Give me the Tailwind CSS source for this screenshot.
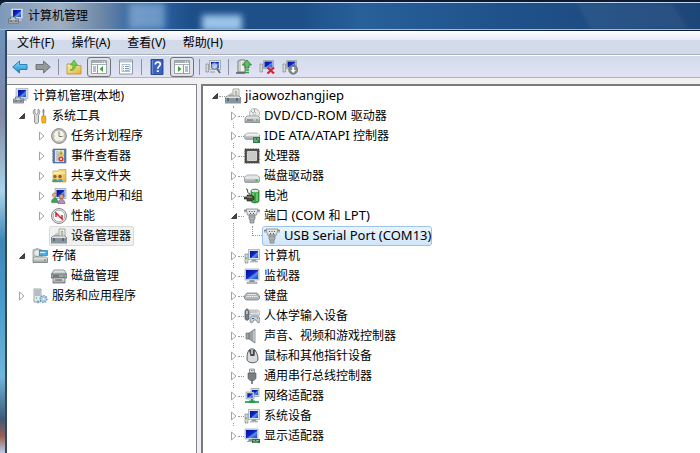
<!DOCTYPE html>
<html lang="zh-CN">
<head>
  <meta charset="UTF-8" />
  <meta name="viewport" content="width=device-width, initial-scale=1.0"/>
  <title>计算机管理</title>
  <script src="https://cdn.jsdelivr.net/npm/@tailwindcss/browser@4"></script>
</head>
<body class="h-screen overflow-hidden flex flex-col bg-[#12233c] font-['Noto_Sans','Noto_Sans_CJK_SC',sans-serif] text-xs text-black">

  <!-- Icon set -->
  <svg class="absolute size-0" aria-hidden="true">
    <defs>
      <linearGradient id="screen" x1="0" y1="0" x2="1" y2="1">
        <stop offset="0" stop-color="#050f8c"/><stop offset=".5" stop-color="#0c28c8"/><stop offset=".62" stop-color="#5c90ee"/><stop offset="1" stop-color="#1a40c0"/>
      </linearGradient>
      <linearGradient id="metal" x1="0" y1="0" x2="0" y2="1">
        <stop offset="0" stop-color="#f4f5f5"/><stop offset="1" stop-color="#9a9fa1"/>
      </linearGradient>
      <linearGradient id="blue" x1="0" y1="0" x2="0" y2="1">
        <stop offset="0" stop-color="#8fdcf8"/><stop offset="1" stop-color="#148bd0"/>
      </linearGradient>
      <linearGradient id="folder" x1="0" y1="0" x2="1" y2="1">
        <stop offset="0" stop-color="#fdf0a8"/><stop offset="1" stop-color="#e3b23c"/>
      </linearGradient>
    </defs>
    <symbol id="i-manage" viewBox="0 0 16 16">
      <path d="M3 .5h12v10H3z" fill="#d5dae3" stroke="#9aa2b0" stroke-width=".6"/>
      <path d="M5 2h8v7H5z" fill="url(#screen)"/>
      <path d="M9 10h4l1 3H8z" fill="#b7bdc8"/>
      <path d="M.5 11h2V9h5v2h3v4H.5z" fill="#c3cacd" stroke="#59646a" stroke-width=".7"/>
      <path d="M1 13h9M3 12v2M8 12v2" stroke="#4a5560" stroke-width=".8"/>
    </symbol>
    <symbol id="i-monitor" viewBox="0 0 16 16">
      <path d="M1 1h14v11H1z" fill="#dfe2e6" stroke="#8e959e" stroke-width=".6"/>
      <path d="M2 2h12v9H2z" fill="url(#screen)"/>
      <path d="M6 12h4l1 2H5z" fill="#8d949c"/><path d="M3 14h10v1.500H3z" fill="#c0c5ca" stroke="#828890" stroke-width=".5"/>
    </symbol>
    <symbol id="i-computer" viewBox="0 0 16 16">
      <path d="M1 6h3v9H1z" fill="#d7dad3" stroke="#777e7a" stroke-width=".6"/><path d="M2 9v2" stroke="#36a83c"/>
      <path d="M4.500 1.500h11v10h-11z" fill="#dfe2e6" stroke="#8e959e" stroke-width=".6"/>
      <path d="M6 3h8v7H6z" fill="url(#screen)"/>
      <path d="M8 11.500h4l1 2H7z" fill="#8d949c"/><path d="M6 13h8v1.500H6z" fill="#b7bcc2"/>
    </symbol>
    <symbol id="i-display" viewBox="0 0 16 16">
      <path d="M1 1h13v10H1z" fill="#dfe2e6" stroke="#8e959e" stroke-width=".6"/>
      <path d="M2 2h11v8H2z" fill="url(#screen)"/>
      <path d="M5 11h4v2H4z" fill="#8d949c"/><path d="M3 13h6v1H3z" fill="#a0a5aa"/>
      <path d="M8 11h8v4H8z" fill="#2c6b4c"/><path d="M9 12.500h2M12 12.500h3M9 14h5" stroke="#a9d6b5" stroke-width=".7"/>
    </symbol>
    <symbol id="i-tools" viewBox="0 0 16 16">
      <path d="M3 1v4l1.500 1.500L6 5V1c2 1 2.500 4 .5 6v7c0 2-4 2-4 0V7C.5 5 1 2 3 1z" fill="#d5d9dc" stroke="#6d7377" stroke-width=".7"/>
      <path d="M11 1h1l.5 2-.5 5h-1l-.5-5z" fill="#848a8e"/><path d="M10 8h3.500l.5 3-.5 4h-3.500l-.5-4z" fill="#f4b51e" stroke="#b87808" stroke-width=".6"/>
    </symbol>
    <symbol id="i-clock" viewBox="0 0 16 16">
      <circle cx="8" cy="8" r="7.500" fill="#b9bbbd" stroke="#7b7f83" stroke-width=".8"/>
      <circle cx="8" cy="8" r="5.900" fill="#fbf1df" stroke="#9d9f9f" stroke-width=".5"/>
      <path d="M8 4v4.500h3.500" fill="none" stroke="#5f86a6"/><path d="M8 3v1M8 12v1M3 8h1M12 8h1" stroke="#b29a6c" stroke-width=".7"/>
    </symbol>
    <symbol id="i-events" viewBox="0 0 16 16">
      <path d="M2 1h13v14H2z" fill="#5b82b3" stroke="#3f5f8a" stroke-width=".6"/><path d="M4 2h9v12H4z" fill="#e4e4dc"/>
      <path d="M5 4h3M5 6h3M5 8h3M5 10h3M5 12h3" stroke="#8091aa" stroke-width=".7"/>
      <path d="M10 2.500l3 5.500H7z" fill="#f8d64a" stroke="#a88920" stroke-width=".4"/><path d="M10 4.500v2" stroke="#332c12" stroke-width=".8"/><circle cx="10" cy="11" r="2.600" fill="#d8392e"/><path d="M9 10l2 2M11 10l-2 2" stroke="#fff" stroke-width=".7"/>
      <path d="M1 3h2M1 6h2M1 9h2M1 12h2" stroke="#747d87"/>
    </symbol>
    <symbol id="i-shared" viewBox="0 0 16 16">
      <path d="M2 3h5l1-1.500h7V14H2z" fill="url(#folder)" stroke="#bd9233" stroke-width=".6"/><path d="M2 5h12" stroke="#fff6c5"/>
      <circle cx="4" cy="8.500" r="1.700" fill="#8d6a2e"/><circle cx="9" cy="8.500" r="1.700" fill="#8a5a2c"/>
      <path d="M1 14c0-4 6-4 6 0z" fill="#3fa66a"/><path d="M6.500 14c0-4 5.500-4 5.500 0z" fill="#3c9dc0"/>
    </symbol>
    <symbol id="i-users" viewBox="0 0 16 16">
      <path d="M4 .5h11v10H4z" fill="#d8dde4" stroke="#808996" stroke-width=".6"/><path d="M5.500 2h8v7h-8z" fill="url(#screen)"/>
      <circle cx="3.500" cy="7" r="2.100" fill="#e2b282" stroke="#805023" stroke-width=".5"/><circle cx="10.500" cy="8.500" r="2.200" fill="#dba371" stroke="#643917" stroke-width=".5"/>
      <path d="M.5 14.500c0-6 6.500-6 6.500 0z" fill="#39a650" stroke="#1e6d34" stroke-width=".5"/><path d="M7 15.700c0-6 7-6 7 0z" fill="#b98ac4" stroke="#71376b" stroke-width=".5"/>
    </symbol>
    <symbol id="i-perf" viewBox="0 0 16 16">
      <circle cx="8" cy="8" r="7.500" fill="#ececec" stroke="#74787a" stroke-width=".9"/><circle cx="8" cy="8" r="5.800" fill="#fff" stroke="#8b8f91" stroke-width=".7"/>
      <path d="M5 9V5l6 6V7" fill="none" stroke="#d3222b" stroke-width="1.500"/>
    </symbol>
    <symbol id="i-device" viewBox="0 0 16 16">
      <path d="M8 1h6v8H8z" fill="#f4f5ef" stroke="#7d8581" stroke-width=".7"/><path d="M10 3h2v4h-2z" fill="#c7ceb4" stroke="#7e876f" stroke-width=".4"/>
      <path d="M4 6l4-2v4H3z" fill="#bdc3c6"/>
      <path d="M2 8h12l2 2v5H0v-5z" fill="url(#metal)" stroke="#5d676c" stroke-width=".7"/><path d="M0 11h16" stroke="#4d5b63"/><path d="M0 11.500h16V15H0z" fill="#87969e"/><path d="M3 10v3M12 10v3" stroke="#364148"/>
    </symbol>
    <symbol id="i-storage" viewBox="0 0 16 16">
      <path d="M1 2l4-1.500L10 2v8H1z" fill="#d5d8d9" stroke="#777c80" stroke-width=".6"/><circle cx="5" cy="5" r="3.500" fill="#e6e8e8" stroke="#858b8e" stroke-width=".6"/>
      <path d="M7.500 2.500h8v5h-8z" fill="#43b4ea" stroke="#1b6b9a" stroke-width=".6"/><path d="M8 4.500h5" stroke="#d9f5ff"/>
      <path d="M1 10l1-1h12l1.500 1v4.500H1z" fill="url(#metal)" stroke="#6c7275" stroke-width=".7"/><path d="M12 12h2" stroke="#3ca642"/>
    </symbol>
    <symbol id="i-disks" viewBox="0 0 16 16">
      <path d="M3 2h10l2 3v3H1V5z" fill="url(#metal)" stroke="#666d70" stroke-width=".7"/><path d="M0 6h16v4H0z" fill="#a1a6a8" stroke="#595f62" stroke-width=".7"/>
      <path d="M2 10h12v5H2z" fill="url(#metal)" stroke="#595f62" stroke-width=".7"/><path d="M2 8h6M4 12h7" stroke="#464d50"/><path d="M12 8h2" stroke="#39a83d"/>
    </symbol>
    <symbol id="i-services" viewBox="0 0 16 16">
      <path d="M2 1h7v13H2z" fill="#e4e9ed" stroke="#78838d" stroke-width=".7"/><path d="M3 3h5M3 5h5M3 7h5" stroke="#697a89" stroke-width=".8"/><path d="M4 10h1" stroke="#36a93d"/>
      <circle cx="11.500" cy="11" r="3.200" fill="#d8e9f6" stroke="#6993b6" stroke-width="1.600" stroke-dasharray="1.500 .9"/><circle cx="11.500" cy="11" r="2.300" fill="#a4c7e2"/><circle cx="11.500" cy="11" r="1" fill="#fff"/>
      <circle cx="6" cy="14" r="1.400" fill="#83aac8"/>
    </symbol>
    <symbol id="i-dvd" viewBox="0 0 16 16">
      <circle cx="10.500" cy="5.500" r="5" fill="#eceeee" stroke="#979c9e" stroke-width=".7"/><path d="M10.500 1v3M7 3l2 2" stroke="#a0a6a9"/><circle cx="10.500" cy="5.500" r="1.300" fill="#fff" stroke="#8a8f91" stroke-width=".6"/>
      <path d="M1 10l2-2h11l2 2v4.500H1z" fill="url(#metal)" stroke="#747a7c" stroke-width=".7"/><path d="M3 12h6" stroke="#606669"/><path d="M12 12h2" stroke="#3aa73d"/>
    </symbol>
    <symbol id="i-ide" viewBox="0 0 16 16">
      <path d="M.5 7l3-2h9l3 2v4.500h-13c-1 0-2-.7-2-2z" fill="url(#metal)" stroke="#93989a" stroke-width=".7"/><path d="M2 7h13" stroke="#fff"/>
      <path d="M9 9h7v6H9z" fill="#2a7a48"/><path d="M10 11h2M13 11h2M10 13h4" stroke="#bde0c0" stroke-width=".8"/>
    </symbol>
    <symbol id="i-cpu" viewBox="0 0 16 16">
      <path d="M1 1h14v14H1z" fill="#55534f" stroke="#3a352e" stroke-width="1.200" stroke-dasharray="1 .6"/><path d="M3.500 3.500h9v9h-9z" fill="#c9cbca" stroke="#f0f0ee" stroke-width=".7"/>
    </symbol>
    <symbol id="i-disk" viewBox="0 0 16 16">
      <path d="M.5 9l3-2h9l3 2v4c0 1-.5 1.500-1.500 1.500H2C1 14.500.5 14 .5 13z" fill="url(#metal)" stroke="#8a8f91" stroke-width=".7"/><path d="M1 10h14" stroke="#fff" stroke-width=".8"/><path d="M11.500 12.300h2" stroke="#31a537" stroke-width="1.400"/>
    </symbol>
    <symbol id="i-battery" viewBox="0 0 16 16">
      <path d="M7 3c0-2.500 8-2.500 8 0v10c0 2.500-8 2.500-8 0z" fill="#35a83f" stroke="#1c5f25" stroke-width=".7"/><ellipse cx="11" cy="3" rx="3.500" ry="1.300" fill="#dfe8df"/><path d="M9 5v8M13 5v8" stroke="#a0e39b"/>
      <path d="M2 1c3 0 0 4 4 5" fill="none" stroke="#222"/><path d="M0 9h3V7h4l3 1.500v3L7 13H3v-2H0" fill="#4b4b42" stroke="#1d1d1a" stroke-width=".6"/><path d="M3 9h5" stroke="#b5a45c"/>
    </symbol>
    <symbol id="i-port" viewBox="0 0 16 16">
      <path d="M0 2h16v1H0z" fill="#8b9093"/><path d="M2 1h12l-1.500 6h-9z" fill="#e2e4e5" stroke="#7f8588" stroke-width=".8"/><path d="M1 1.500v3M15 1.500v3" stroke="#7f8588" stroke-width="1.200"/>
      <path d="M5 3.500h1M7.500 3.500h1M10 3.500h1M6 5.500h1M9 5.500h1" stroke="#51585c"/>
      <path d="M5 7h6v4l-1 1v3H6v-3l-1-1z" fill="#b2b6b8" stroke="#6d7376" stroke-width=".7"/><path d="M5 9h6M6 12h4" stroke="#7f8587" stroke-width=".7"/>
    </symbol>
    <symbol id="i-keyboard" viewBox="0 0 16 16">
      <path d="M3 5h10l2.500 3v2.500L14 12H2L.5 10.500V8z" fill="#b4b7b9" stroke="#6e7376" stroke-width=".7"/><path d="M3.500 6.500h9M2.500 8.500h11" stroke="#f7f7f7" stroke-width="1.100" stroke-dasharray="1.200 .6"/>
    </symbol>
    <symbol id="i-hid" viewBox="0 0 16 16">
      <path d="M1 4c0-4 4-4 4 0v6c0 3-4 3-4 0z" fill="#777d80" stroke="#474c4f" stroke-width=".7"/><path d="M3 3v3" stroke="#fff"/>
      <path d="M5 2h9l2 2v3H6z" fill="#dfe2e4" stroke="#8b9194" stroke-width=".6"/><path d="M6 4h8" stroke="#8e9497" stroke-dasharray="1 .6"/>
      <path d="M6 14c0-6 1-6 3-6h4c2 0 3 1 3 6l-2 1-2-3h-2l-2 3z" fill="#c4d1da" stroke="#67747c" stroke-width=".7"/><path d="M8 10.500h2M13 10h1" stroke="#34698c"/>
    </symbol>
    <symbol id="i-sound" viewBox="0 0 16 16">
      <path d="M2 5h3l6-4v14l-6-4H2z" fill="#9ea2a5" stroke="#6c7174" stroke-width=".7"/><path d="M10 2.500v11" stroke="#dfe1e2"/><path d="M5 5v6" stroke="#5c6164" stroke-width=".7"/>
    </symbol>
    <symbol id="i-mouse" viewBox="0 0 16 16">
      <path d="M5 2c1-1.500 5-1.500 6 0 2 3 3 6 3 9 0 5-11 5-11 0 0-3 0-6 2-9z" fill="#d9dadb" stroke="#484b4d" stroke-width=".9"/><path d="M5 2l1.500 6h4L11 2" fill="#46494b"/><path d="M8 2v4" stroke="#ececec" stroke-width="1.400"/>
    </symbol>
    <symbol id="i-usb" viewBox="0 0 16 16">
      <path d="M5.500 1h5v4h-5z" fill="#e0e2e3" stroke="#707578" stroke-width=".7"/><path d="M7 2.500h.8M8.600 2.500h.8" stroke="#555"/><path d="M4 5h8v5c0 1-1.500 2-2.500 2.500h-3C5.500 12 4 11 4 10z" fill="#7a7e80" stroke="#505456" stroke-width=".6"/><path d="M8 12v4" stroke="#55595b" stroke-width="1.400"/>
    </symbol>
    <symbol id="i-network" viewBox="0 0 16 16">
      <path d="M7 .5h8v8H7z" fill="#dfe3e7" stroke="#7c8792" stroke-width=".6"/><path d="M8 2h6v5H8z" fill="url(#screen)"/>
      <path d="M2 4h8v7H2z" fill="#dfe3e7" stroke="#7c8792" stroke-width=".6"/><path d="M3.300 5.300h5.500v4.500H3.300z" fill="url(#screen)"/>
      <path d="M8 11v3" stroke="#239a50" stroke-width="2"/><path d="M1 14h14" stroke="#32b567" stroke-width="2"/><path d="M5 12.500h6v2.500H5z" fill="#239a50"/>
    </symbol>
    <symbol id="i-back" viewBox="0 0 16 16">
      <path d="M.7 8L7.500 2v3.500H15v5H7.500V14z" fill="url(#blue)" stroke="#1f77b4" stroke-width=".9"/>
    </symbol>
    <symbol id="i-forward" viewBox="0 0 16 16">
      <path d="M15.300 8L8.500 2v3.500H1v5h7.500V14z" fill="#96999b" stroke="#6a6d6f" stroke-width=".9"/>
    </symbol>
    <symbol id="i-up" viewBox="0 0 16 16">
      <path d="M1 5h5l1 1.500h8V15H1z" fill="url(#folder)" stroke="#b98e34" stroke-width=".8"/><path d="M4 11c3 0 3-3 3-5H4.500L8 1l3.500 5H9.500c0 4-2 6-5.500 5z" fill="#6fd04e" stroke="#3c9a2a" stroke-width=".6"/>
    </symbol>
    <symbol id="i-pane-left" viewBox="0 0 16 16">
      <path d="M.5 1.500h15v13H.5z" fill="#fff" stroke="#9aa2a9"/><path d="M1 2h14v2H1z" fill="#a5adb5"/><path d="M1 5.500h14" stroke="#a8b0b7"/><path d="M6.500 6v8" stroke="#8f99a3"/><path d="M2 8h3M2 10h3M2 12h3" stroke="#637f9f"/><path d="M12 7v6l-3.500-3z" fill="#3aa535"/><path d="M11 3h1M13 3h1" stroke="#fff"/>
    </symbol>
    <symbol id="i-pane-right" viewBox="0 0 16 16">
      <path d="M.5 1.500h15v13H.5z" fill="#fff" stroke="#9aa2a9"/><path d="M1 2h14v2H1z" fill="#a5adb5"/><path d="M1 5.500h14" stroke="#a8b0b7"/><path d="M9.500 6v8" stroke="#8f99a3"/><path d="M11 8h3M11 10h3M11 12h3" stroke="#637f9f"/><path d="M4 7v6l3.500-3z" fill="#3aa535"/><path d="M11 3h1M13 3h1" stroke="#fff"/>
    </symbol>
    <symbol id="i-props" viewBox="0 0 16 16">
      <path d="M1.500 1h13v14h-13z" fill="#fff" stroke="#85909b" stroke-width=".9"/><path d="M2 1.500h12v2H2z" fill="#b5c3d2"/><path d="M4 5.500h8v7H4z" fill="none" stroke="#8ea4ba" stroke-width=".7"/><path d="M5 7.500h1M7 7.500h4M5 9.500h1M7 9.500h4M5 11.300h1M7 11.300h4" stroke="#7d9aba"/>
    </symbol>
    <symbol id="i-help" viewBox="0 0 16 16">
      <path d="M2 .5h12v15H2z" fill="#3d62bd" stroke="#1a367f" stroke-width=".8"/><path d="M3.500 1v14" stroke="#6c8fdc"/><path d="M6.300 5.500c0-3.500 5.400-3 5 0-.2 1.700-2.500 2-2.500 4.300" fill="none" stroke="#fff" stroke-width="1.700"/><path d="M7.800 11.300h2v1.700h-2z" fill="#fff"/>
    </symbol>
    <symbol id="i-scan" viewBox="0 0 16 16">
      <path d="M1 5h2.500v8H1z" fill="#d6d9d5" stroke="#777d7a" stroke-width=".6"/><path d="M4.500 1.500h11v9h-11z" fill="#dfe2e6" stroke="#848b94" stroke-width=".6"/><path d="M6 3h8v6H6z" fill="url(#screen)"/><path d="M5 13h5" stroke="#9298a0"/>
      <circle cx="9.500" cy="7" r="3.200" fill="#d9eefc" fill-opacity=".75" stroke="#687481"/><path d="M12 9.500l3 4.500" stroke="#59636f" stroke-width="1.700"/>
    </symbol>
    <symbol id="i-update" viewBox="0 0 16 16">
      <path d="M2 2l2-1h5v12H2z" fill="#f0f1ec" stroke="#565e5b" stroke-width=".8"/><path d="M4 1v12M6 4h2M6 6h2" stroke="#8a928c" stroke-width=".7"/><path d="M0 14h9" stroke="#3f4744" stroke-width="1.300"/>
      <path d="M11 1l4.500 5H13v3H9V6H6.500z" fill="#5cc069" stroke="#176c2a" stroke-width=".7"/><path d="M9 11h4M9 13.500h4" stroke="#329e45" stroke-width="1.500"/>
    </symbol>
    <symbol id="i-remove" viewBox="0 0 16 16">
      <path d="M1 5h2.500v8H1z" fill="#d6d9d5" stroke="#777d7a" stroke-width=".6"/><path d="M4.500 1.500h10v8h-10z" fill="#dfe2e6" stroke="#848b94" stroke-width=".6"/><path d="M5.500 2.500h8v6h-8z" fill="url(#screen)"/>
      <path d="M8.500 8.500l6.500 6M15 8.500l-6.500 6" stroke="#dc1f2a" stroke-width="2.200"/>
    </symbol>
    <symbol id="i-disable" viewBox="0 0 16 16">
      <path d="M1 5h2.500v8H1z" fill="#d6d9d5" stroke="#777d7a" stroke-width=".6"/><path d="M4.500 1.500h10v8h-10z" fill="#dfe2e6" stroke="#848b94" stroke-width=".6"/><path d="M5.500 2.500h8v6h-8z" fill="url(#screen)"/>
      <circle cx="11.200" cy="10.800" r="4.500" fill="#85898c" stroke="#5f6467" stroke-width=".6"/><path d="M10.200 8h2v3h1.700l-2.700 3-2.700-3h1.700z" fill="#fff"/>
    </symbol>
    <symbol id="i-closed" viewBox="0 0 8 10">
      <path d="M1.500 1l4.500 4-4.500 4z" fill="#fff" stroke="#a3a3a3"/>
    </symbol>
    <symbol id="i-open" viewBox="0 0 8 10">
      <path d="M6.500 2.500v5h-5z" fill="#454545" stroke="#222" stroke-width=".8"/>
    </symbol>
  </svg>

  <div class="h-[2px] shrink-0 bg-[#0b1b35]"></div>

  <!-- Title bar -->
  <header class="relative overflow-hidden h-7 shrink-0 flex items-center gap-1 pl-2 border-y border-t-[#c5d9ee] border-b-[#a3b8d4] bg-[linear-gradient(to_right,#7d99ba_0,#9fb0c2_60px,#7089a8_100px,#4470a4_125px,#2a5f9c_165px,#1d4f88_190px,#1d5089_300px,#28609a_360px,#1f528b_500px,#1d4678_100%)] rounded-tl-md">
    <div class="absolute inset-y-0 left-[129px] w-9 bg-[#a8cbee]/50 blur-[3px]"></div>
    <div class="absolute top-3 left-[202px] h-4 w-10 bg-[#a8d0f4]/90 blur-[3px]"></div>
    <div class="absolute inset-y-0 right-5 w-24 skew-x-[30deg] bg-white/5 blur-[2px]"></div>
    <svg class="relative size-4"><use href="#i-manage"/></svg>
    <h1 class="relative">计算机管理</h1>
  </header>

  <div class="flex-1 min-h-0 flex">
    <!-- Window frame -->
    <div class="w-[7px] shrink-0 border-r-2 border-[#33475f] bg-[linear-gradient(to_bottom,#6a93bd_0,#8188a6_20%,#a9d4e8_38%,#3f86b5_50%,#4a9ccb_65%,#6fb6da_82%,#3d5a78_92%,#9a5f52_96%,#b9cdea_100%)]"></div>

    <div class="flex-1 min-w-0 flex flex-col bg-[#f0f0f0] border-t border-[#101f38]">
      <nav class="h-6 shrink-0 flex items-center gap-[17px] px-2.5 border-b border-[#a9adbf] bg-linear-to-b from-white from-0% via-[#e6eaf4] via-40% to-[#d3dbea] to-40%">
        <button>文件(F)</button>
        <button>操作(A)</button>
        <button>查看(V)</button>
        <button>帮助(H)</button>
      </nav>

      <!-- Toolbar -->
      <div class="h-[23px] shrink-0 flex items-center gap-[7px] px-[5px] border-y border-t-white border-b-[#b0b3c2] bg-linear-to-b from-[#d2dbe9] to-[#e1e3f4]">
        <button aria-label="后退"><svg class="size-4"><use href="#i-back"/></svg></button>
        <button aria-label="前进"><svg class="size-4"><use href="#i-forward"/></svg></button>
        <span class="w-px h-4 bg-[#8b91a3]"></span>
        <div class="flex items-center gap-[5px]">
          <button aria-label="上移一级"><svg class="size-4"><use href="#i-up"/></svg></button>
          <button aria-label="显示/隐藏控制台树" class="w-6 h-5 flex items-center justify-center border border-[#6f737c] rounded-[3px] bg-[#dfe1e6]"><svg class="size-4"><use href="#i-pane-left"/></svg></button>
        </div>
        <button aria-label="属性"><svg class="size-4"><use href="#i-props"/></svg></button>
        <span class="w-px h-4 bg-[#8b91a3]"></span>
        <div class="flex items-center gap-[5px]">
          <button aria-label="帮助"><svg class="size-4"><use href="#i-help"/></svg></button>
          <button aria-label="显示/隐藏操作窗格" class="w-6 h-5 flex items-center justify-center border border-[#6f737c] rounded-[3px] bg-[#dfe1e6]"><svg class="size-4"><use href="#i-pane-right"/></svg></button>
          <span class="w-px h-4 bg-[#8b91a3]"></span>
          <button aria-label="扫描检测硬件改动"><svg class="size-4"><use href="#i-scan"/></svg></button>
        </div>
        <span class="w-px h-4 bg-[#8b91a3]"></span>
        <button aria-label="更新驱动程序"><svg class="size-4"><use href="#i-update"/></svg></button>
        <button aria-label="卸载"><svg class="size-4"><use href="#i-remove"/></svg></button>
        <button aria-label="禁用"><svg class="size-4"><use href="#i-disable"/></svg></button>
      </div>

      <main class="flex-1 min-h-0 flex gap-1 pt-1.5">
        <!-- Console tree -->
        <aside class="w-[190px] shrink-0 border-t border-r border-[#828790] bg-white pt-px">
          <ul id="consoleTree"></ul>
        </aside>

        <!-- Device tree -->
        <section class="flex-1 min-w-0 border-t-2 border-l-2 border-[#7b7b7b] bg-white">
          <div class="h-5 flex items-center pl-2">
            <svg class="w-2 h-2.5"><use href="#i-open"/></svg>
            <span class="w-1.5 border-t border-dotted border-[#999]"></span>
            <svg class="size-4 mr-1"><use href="#i-device"/></svg>
            <span class="text-[13px]">jiaowozhangjiep</span>
          </div>
          <ul id="deviceTree" class="ml-[30px] border-l border-dotted border-[#999]"></ul>
        </section>
      </main>
    </div>
  </div>

  <script>
    const indents = ["pl-1", "pl-[11px]", "pl-[31px]"];
    const gaps = ["", "mr-1", "mr-[3px]"];

    // level, icon, label, arrow
    const consoleItems = [
      [0, "manage", "计算机管理(本地)", ""],
      [1, "tools", "系统工具", "open"],
      [2, "clock", "任务计划程序", "closed"],
      [2, "events", "事件查看器", "closed"],
      [2, "shared", "共享文件夹", "closed"],
      [2, "users", "本地用户和组", "closed"],
      [2, "perf", "性能", "closed"],
      [2, "device", "设备管理器", "none"],
      [1, "storage", "存储", "open"],
      [2, "disks", "磁盘管理", "none"],
      [1, "services", "服务和应用程序", "closed"]
    ];

    const latin = text => `<span class="text-[13px]">${text}</span>`;

    const deviceItems = [
      ["dvd", latin("DVD/CD-ROM ") + "驱动器"],
      ["ide", latin("IDE ATA/ATAPI ") + "控制器"],
      ["cpu", "处理器"],
      ["disk", "磁盘驱动器"],
      ["battery", "电池"],
      ["port", "端口" + latin(" (COM ") + "和" + latin(" LPT)"), "USB Serial Port (COM13)"],
      ["computer", "计算机"],
      ["monitor", "监视器"],
      ["keyboard", "键盘"],
      ["hid", "人体学输入设备"],
      ["sound", "声音、视频和游戏控制器"],
      ["mouse", "鼠标和其他指针设备"],
      ["usb", "通用串行总线控制器"],
      ["network", "网络适配器"],
      ["computer", "系统设备"],
      ["display", "显示适配器"]
    ];

    document.getElementById("consoleTree").innerHTML = consoleItems.map(([level, icon, label, arrow]) => `
      <li class="h-5 flex items-center ${indents[level]}">
        ${arrow ? `<svg class="w-2 h-2.5 ${gaps[level]}">${arrow === "none" ? "" : `<use href="#i-${arrow}"/>`}</svg>` : ""}
        <span class="h-5 flex items-center gap-1 pl-px pr-0.5 border rounded-xs ${icon === "device" ? "border-[#d9d9d9] bg-[#f0f0f0]" : "border-transparent"}">
          <svg class="size-4"><use href="#i-${icon}"/></svg>${label}
        </span>
      </li>`).join("");

    document.getElementById("deviceTree").innerHTML = deviceItems.map(([icon, label, child], i) => `
      <li>
        <div class="h-5 flex items-center">
          <svg class="w-2 -ml-1 bg-white ${i === deviceItems.length - 1 ? "h-5" : "h-3.5"}" viewBox="0 0 8 10"><use href="#i-${child ? "open" : "closed"}"/></svg>
          <span class="w-1.5 border-t border-dotted border-[#999]"></span>
          <svg class="size-4 mr-1"><use href="#i-${icon}"/></svg>
          <span class="whitespace-pre">${label}</span>
        </div>
        ${child ? `
        <div class="h-5 flex items-start pl-[18px]">
          <span class="w-2.5 h-2.5 border-l border-b border-dotted border-[#999]"></span>
          <span class="h-5 flex items-center gap-1 pl-px border border-[#9cc3e8] rounded-[3px] bg-linear-to-b from-[#eaf4fd] to-[#cfe5fa] text-[13px]">
            <svg class="size-4"><use href="#i-port"/></svg>${child}
          </span>
        </div>` : ""}
      </li>`).join("");
  </script>
</body>
</html>
